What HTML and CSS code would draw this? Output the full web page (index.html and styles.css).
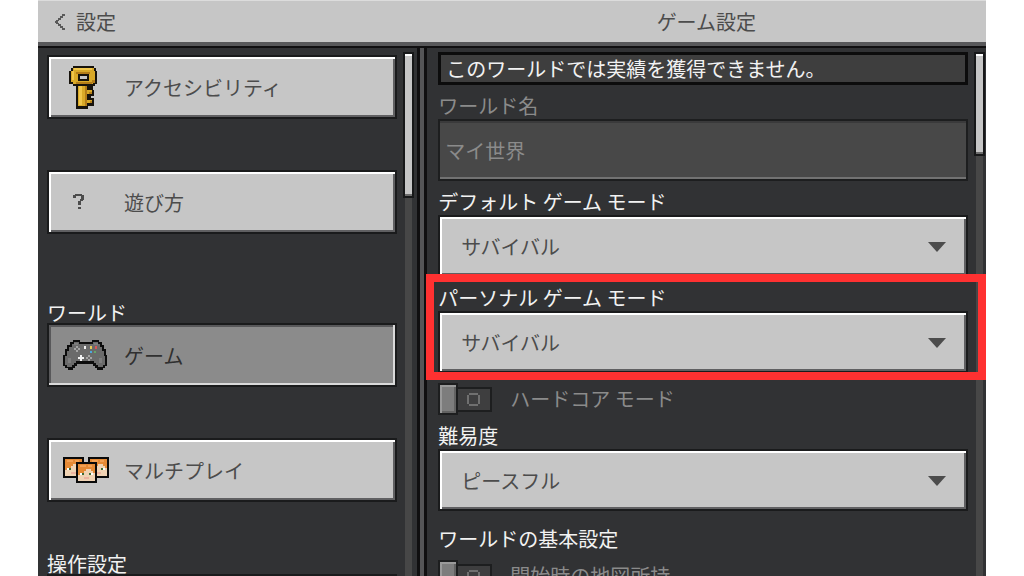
FILE: index.html
```html
<!DOCTYPE html>
<html lang="ja">
<head>
    <meta charset="UTF-8">
    <meta name="viewport" content="width=device-width, initial-scale=1.0">
    <title>ゲーム設定</title>
    <link rel="stylesheet" href="styles.css">
</head>
<body>
    <div class="app">
        <!-- Header -->
        <header class="header">
            <button type="button" class="back">
                <svg class="back-icon" viewBox="0 0 12 16" shape-rendering="crispEdges">
                    <path fill="#5a5a5a" d="M8 0h3v2h-3zM6 2h3v2h-3zM4 4h3v2h-3zM2 6h3v1h-3zM1 7h3v2h-3zM2 9h3v1h-3zM4 10h3v2h-3zM6 12h3v2h-3zM8 14h3v2h-3z"/>
                </svg>
                設定
            </button>
            <h1 class="title">ゲーム設定</h1>
        </header>

        <div class="panels">
            <!-- Sidebar -->
            <div class="sidebar">
                <nav class="menu">
                    <button type="button" class="menu-item">
                        <svg class="icon" viewBox="0 0 48 48" shape-rendering="crispEdges">
                            <path fill="#17130c" d="M11 3h21v2h2v3h1v13h-2v2h-2v4h1v6h-3v2h3v8h-6v3H14V23h-3v-2H7V8h2V5h2z"/>
                            <path fill="#d9a928" d="M11 5h21v3h1v12h-2v1H11v-2H9V8h2z"/>
                            <path fill="#f0c64b" d="M12 5h18v2H12zM10 8h2v9h-2z"/>
                            <path fill="#b37c18" d="M14 9h14v2H14zM30 17h3v3h-3v1H14v-2h16z"/>
                            <path fill="#17130c" d="M16 11h11v7H16z"/>
                            <path fill="#c6c6c6" d="M18 13h7v3h-7z"/>
                            <path fill="#d9a928" d="M16 23h9v20h-9zM25 27h5v4h-5zM25 37h5v3h-5z"/>
                            <path fill="#f0c64b" d="M17 23h3v19h-3z"/>
                            <path fill="#b37c18" d="M23 23h2v20h-2zM27 29h3v2h-3zM28 38h2v2h-2z"/>
                        </svg>
                        アクセシビリティ
                    </button>
                    <button type="button" class="menu-item">
                        <svg class="icon" viewBox="0 0 48 48" shape-rendering="crispEdges">
                            <path fill="#4c4c4c" d="M13 16h7v2h-7zM11 17h3v3h-3zM19 17h3v5h-3zM18 21h3v2h-3zM16 23h3v4h-3zM16 29h3v2h-3z"/>
                        </svg>
                        遊び方
                    </button>

                    <h2 class="menu-title menu-title-world">ワールド</h2>
                    <button type="button" class="menu-item active">
                        <svg class="icon" viewBox="0 0 48 48" shape-rendering="crispEdges">
                            <path fill="#0c0c0c" d="M11 9h7v2h12V9h7v2h3v3h2v4h2v6h1v11h-2v2h-2v2h-6v-2h-2v-2h-2v-2H15v2h-2v2h-2v2H6v-2H3v-2H1V24h2v-6h2v-4h3v-3h3z"/>
                            <path fill="#6a6a6a" d="M12 11h5v2h14v-2h5v2h2v3h2v4h2v5h1v9h-2v2h-5v-2h-2v-2h-2v-2H14v2h-2v2h-2v2H5v-2H3v-9h2v-5h2v-4h3v-3h2z"/>
                            <path fill="#7d7d7d" d="M12 12h4v2h-4zM32 12h4v2h-4zM6 27h3v5H6zM37 27h3v5h-3z"/>
                            <path fill="#a3a3a3" d="M14 15h2v2h-2zM12 17h2v2h-2zM16 17h2v2h-2zM14 19h2v2h-2zM26 24h2v2h-2zM24 26h2v2h-2zM28 26h2v2h-2zM26 28h2v2h-2z"/>
                            <path fill="#f2f2f2" d="M22 15h2v3h-2zM18 24h2v2h2v2h-2v2h-2v-2h-2v-2h2z"/>
                            <path fill="#e5cb55" d="M28 15h2v3h-2z"/>
                            <path fill="#dc5454" d="M33 15h2v3h-2z"/>
                            <path fill="#4ca9df" d="M28 20h2v2h-2z"/>
                            <path fill="#67a568" d="M32 20h2v2h-2z"/>
                        </svg>
                        ゲーム
                    </button>
                    <button type="button" class="menu-item">
                        <svg class="icon" viewBox="0 0 48 48" shape-rendering="crispEdges">
                            <defs>
                                <g id="face">
                                    <path fill="#0a0a0a" d="M0 0h21v21H0z"/>
                                    <path fill="#f0d3b4" d="M2 2h17v17H2z"/>
                                    <path fill="#e58a35" d="M2 2h17v9h-2V9h-2V7h-5v2H8v2H4v2H2z"/>
                                    <path fill="#f3a052" d="M4 3h6v2H4zM12 3h4v2h-4z"/>
                                    <path fill="#fff" d="M4 11h2v2H4zM15 11h2v2h-2z"/>
                                    <path fill="#3e6c35" d="M6 11h2v2H6zM13 11h2v2h-2z"/>
                                    <path fill="#edb4a0" d="M8 15h5v2H8z"/>
                                </g>
                            </defs>
                            <use href="#face" x="1" y="11"/>
                            <use href="#face" x="26" y="11"/>
                            <use href="#face" x="14" y="16"/>
                        </svg>
                        マルチプレイ
                    </button>

                    <h2 class="menu-title">操作設定</h2>
                    <button type="button" class="menu-item" aria-label="操作設定"></button>
                </nav>
                <div class="scrollbar">
                    <div class="thumb thumb-menu"></div>
                </div>
            </div>

            <div class="divider"></div>

            <!-- Game settings -->
            <main class="settings">
                <form class="form">
                    <p class="notice">このワールドでは実績を獲得できません。</p>

                    <div class="field">
                        <label class="label muted" for="world-name">ワールド名</label>
                        <input class="text-box" type="text" id="world-name" value="マイ世界" disabled>
                    </div>

                    <div class="field">
                        <label class="label" for="default-mode">デフォルト ゲーム モード</label>
                        <div class="dropdown">
                            <select id="default-mode">
                                <option>サバイバル</option>
                            </select>
                            <svg class="arrow" viewBox="0 0 18 10"><path fill="#4c4c4c" d="M0 0h18L9 10z"/></svg>
                        </div>
                    </div>

                    <div class="field highlight">
                        <label class="label" for="personal-mode">パーソナル ゲーム モード</label>
                        <div class="dropdown">
                            <select id="personal-mode">
                                <option>サバイバル</option>
                            </select>
                            <svg class="arrow" viewBox="0 0 18 10"><path fill="#4c4c4c" d="M0 0h18L9 10z"/></svg>
                        </div>
                    </div>

                    <div class="toggle">
                        <input class="switch" type="checkbox" id="hardcore" disabled>
                        <label for="hardcore">ハードコア モード</label>
                    </div>

                    <div class="field">
                        <label class="label" for="difficulty">難易度</label>
                        <div class="dropdown">
                            <select id="difficulty">
                                <option>ピースフル</option>
                            </select>
                            <svg class="arrow" viewBox="0 0 18 10"><path fill="#4c4c4c" d="M0 0h18L9 10z"/></svg>
                        </div>
                    </div>

                    <h2 class="form-title">ワールドの基本設定</h2>
                    <div class="toggle">
                        <input class="switch" type="checkbox" id="start-map" disabled>
                        <label for="start-map">開始時の地図所持</label>
                    </div>
                </form>
                <div class="scrollbar">
                    <div class="thumb thumb-form"></div>
                </div>
            </main>
        </div>
    </div>
</body>
</html>
```
FILE: styles.css
```css
/* General Reset */
* {
    margin: 0;
    padding: 0;
    box-sizing: border-box;
}

body {
    background-color: #fff;
    padding: 0 38px;
}

body,
button,
input,
select {
    font-family: "Noto Sans CJK JP", sans-serif;
    font-size: 20px;
    font-weight: normal;
}

.app {
    display: flex;
    flex-direction: column;
    height: 100vh;
    overflow: hidden;
    background-color: #313234;
}

/* Header */
.header {
    display: flex;
    flex-shrink: 0;
    align-items: center;
    height: 48px;
    background-color: #c6c6c6;
    border-top: 1px solid #dcdcdc;
    border-bottom: 2px solid #100f10;
    box-shadow: inset 0 -4px #58585a;
    padding-bottom: 3px;
    color: #4c4c4c;
}

.back {
    display: flex;
    align-items: center;
    gap: 10px;
    width: 41%;
    padding-left: 16px;
    border: none;
    background: none;
    color: inherit;
    line-height: 24px;
}

.back-icon {
    width: 12px;
    height: 16px;
}

.title {
    flex: 1;
    text-align: center;
    font-size: 20px;
    font-weight: normal;
    line-height: 24px;
}

/* Panels */
.panels {
    display: flex;
    flex: 1;
    min-height: 0;
}

.sidebar {
    display: flex;
    justify-content: space-between;
    width: 40%;
    padding: 4px 3px 0 9px;
}

.divider {
    width: 10px;
    border: solid #100f10;
    border-width: 0 3px;
    background-color: #555557;
}

.settings {
    display: flex;
    justify-content: space-between;
    flex: 1;
    gap: 6px;
    padding: 4px 1px 0 11px;
}

/* Scroll bars */
.scrollbar {
    flex-shrink: 0;
    width: 11px;
    border: solid #313234;
    border-width: 0 2px;
    background-color: #474747;
}

.thumb {
    margin: 0 -2px;
    border: 2px solid #171819;
    background-color: #c6c6c6;
    box-shadow: inset 0 2px #fff, inset 0 -2px #6b6b6b;
}

.thumb-menu {
    height: 146px;
}

.thumb-form {
    height: 104px;
}

/* Menu */
.menu {
    flex: 1;
    margin-right: 6px;
    padding-top: 3px;
}

.menu-item {
    display: flex;
    align-items: center;
    gap: 14px;
    width: 100%;
    height: 64px;
    margin-bottom: 51px;
    padding-left: 13px;
    border: 2px solid #1a1b1c;
    background-color: #c6c6c6;
    box-shadow: inset 2px 2px #fff, inset -2px -2px #606062;
    color: #4c4c4c;
}

.menu-item.active {
    background-color: #8b8b8b;
    box-shadow: inset -2px -2px #dadada, inset 2px 2px #58585a;
    color: #303030;
}

.icon {
    width: 48px;
    height: 48px;
}

.menu-title {
    margin-top: 52px;
    color: #f2f2f2;
    font-size: 20px;
    font-weight: normal;
    line-height: 20px;
}

.menu-title-world {
    margin-top: 69px;
}

/* Form */
.form {
    flex: 1;
    color: #f2f2f2;
}

.notice {
    height: 33px;
    padding-left: 5px;
    border: 3px solid #0c0c0c;
    background-color: #3e3e3e;
    line-height: 28px;
}

.field {
    position: relative;
}

.label {
    display: block;
    padding-top: 8px;
    line-height: 26px;
}

.muted {
    color: #8b8b8b;
}

.text-box {
    display: block;
    width: 100%;
    height: 62px;
    padding: 0 5px;
    border: 2px solid #1d1e1f;
    background-color: #484848;
    box-shadow: inset 0 2px #3a3a3b, inset 0 -2px #727272;
    color: #8b8b8b;
}

.dropdown {
    position: relative;
}

select {
    display: block;
    appearance: none;
    width: 100%;
    height: 62px;
    padding: 0 21px;
    border: 2px solid #1a1b1c;
    border-radius: 0;
    background-color: #c6c6c6;
    box-shadow: inset 2px 2px #fff, inset -2px -2px #606062;
    color: #4c4c4c;
}

.arrow {
    position: absolute;
    top: 27px;
    right: 22px;
    width: 18px;
    height: 10px;
    pointer-events: none;
}

/* Red frame round the personal game mode */
.highlight::after {
    content: "";
    position: absolute;
    z-index: 1;
    inset: -3px -18px -7px -12px;
    border: 8px solid #ff3131;
    pointer-events: none;
}

/* Toggles */
.toggle {
    display: flex;
    align-items: center;
    gap: 18px;
    padding-top: 10px;
    color: #8b8b8b;
    line-height: 32px;
}

.switch {
    appearance: none;
    display: flex;
    align-items: center;
    width: 54px;
    height: 32px;
}

.switch::before {
    content: "";
    box-sizing: border-box;
    width: 20px;
    height: 32px;
    border: 2px solid #1d1e1f;
    background-color: #7d7d7d;
    box-shadow: inset 2px 2px #9a9a9a, inset -2px -2px #626262;
}

.switch::after {
    content: "";
    box-sizing: border-box;
    flex: 1;
    height: 25px;
    border: 2px solid #1d1e1f;
    border-left: none;
    background:
        linear-gradient(#707070, #707070) 11px 4px / 9px 2px no-repeat,
        linear-gradient(#707070, #707070) 11px 15px / 9px 2px no-repeat,
        linear-gradient(#707070, #707070) 9px 6px / 2px 9px no-repeat,
        linear-gradient(#707070, #707070) 20px 6px / 2px 9px no-repeat,
        #3e3e3f;
}

.form-title {
    padding-top: 16px;
    font-size: 20px;
    font-weight: normal;
    line-height: 23px;
}
```
